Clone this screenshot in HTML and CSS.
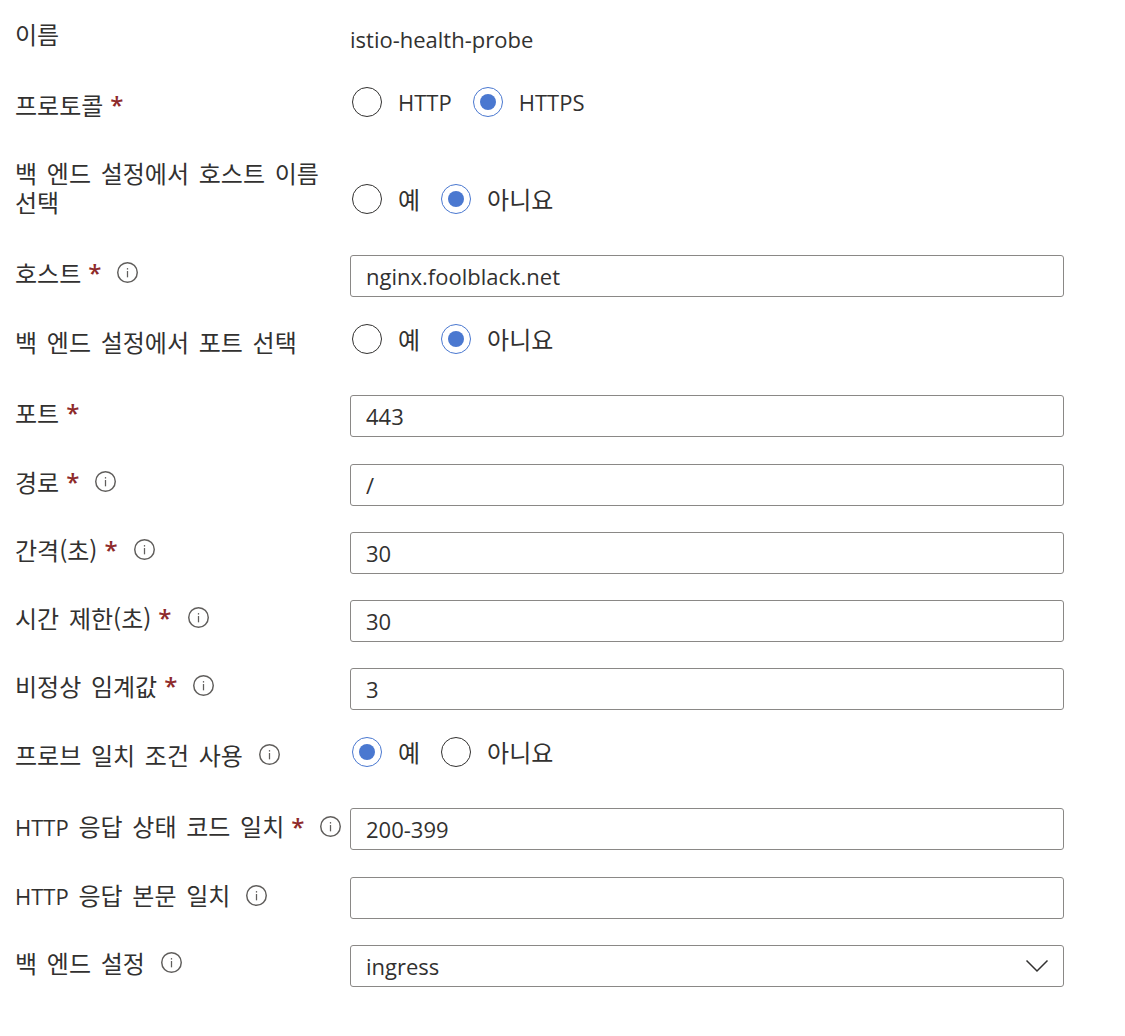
FILE: index.html
```html
<!DOCTYPE html>
<html lang="ko">
<head>
    <meta charset="utf-8">
    <title>상태 프로브</title>
    <link rel="stylesheet" href="styles.css">
</head>
<body>
<svg class="defs" width="0" height="0" aria-hidden="true">
    <symbol id="info" viewBox="0 0 20 20">
        <circle cx="10" cy="10" r="9.3" fill="none" stroke="currentColor" stroke-width="1.4"/>
        <rect x="9.4" y="8.6" width="1.2" height="6" fill="currentColor"/>
        <rect x="9.4" y="5.8" width="1.2" height="1.4" fill="currentColor"/>
    </symbol>
</svg>
<form class="probe-form">
    <div class="row row-name">
        <div class="label">이름</div>
        <div class="value">istio-health-probe</div>
    </div>

    <div class="row row-choice">
        <div class="label">프로토콜<span class="req">*</span></div>
        <div class="choices">
            <span class="radio"></span><span class="choice-text">HTTP</span>
            <span class="radio on"></span><span class="choice-text">HTTPS</span>
        </div>
    </div>

    <div class="row row-tall">
        <div class="label">백 엔드 설정에서 호스트 이름<br>선택</div>
        <div class="choices">
            <span class="radio"></span><span class="choice-text ko">예</span>
            <span class="radio on"></span><span class="choice-text ko">아니요</span>
        </div>
    </div>

    <div class="row row-field wide">
        <div class="label">호스트<span class="req">*</span><svg class="info"><use href="#info"/></svg></div>
        <input class="field" value="nginx.foolblack.net">
    </div>

    <div class="row row-choice">
        <div class="label">백 엔드 설정에서 포트 선택</div>
        <div class="choices">
            <span class="radio"></span><span class="choice-text ko">예</span>
            <span class="radio on"></span><span class="choice-text ko">아니요</span>
        </div>
    </div>

    <div class="row row-field wide">
        <div class="label">포트<span class="req">*</span></div>
        <input class="field" value="443">
    </div>

    <div class="row row-field">
        <div class="label">경로<span class="req">*</span><svg class="info"><use href="#info"/></svg></div>
        <input class="field" value="/">
    </div>

    <div class="row row-field">
        <div class="label">간격(초)<span class="req">*</span><svg class="info"><use href="#info"/></svg></div>
        <input class="field" value="30">
    </div>

    <div class="row row-field">
        <div class="label">시간 제한(초)<span class="req">*</span><svg class="info"><use href="#info"/></svg></div>
        <input class="field" value="30">
    </div>

    <div class="row row-field wide">
        <div class="label">비정상 임계값<span class="req">*</span><svg class="info"><use href="#info"/></svg></div>
        <input class="field" value="3">
    </div>

    <div class="row row-choice">
        <div class="label">프로브 일치 조건 사용<svg class="info"><use href="#info"/></svg></div>
        <div class="choices">
            <span class="radio on"></span><span class="choice-text ko">예</span>
            <span class="radio"></span><span class="choice-text ko">아니요</span>
        </div>
    </div>

    <div class="row row-field wide">
        <div class="label"><span><span class="latin">HTTP</span> 응답 상태 코드 일치</span><span class="req">*</span><svg class="info"><use href="#info"/></svg></div>
        <input class="field" value="200-399">
    </div>

    <div class="row row-field">
        <div class="label"><span><span class="latin">HTTP</span> 응답 본문 일치</span><svg class="info"><use href="#info"/></svg></div>
        <input class="field" value="">
    </div>

    <div class="row row-field">
        <div class="label">백 엔드 설정<svg class="info"><use href="#info"/></svg></div>
        <div class="field select">
            <span>ingress</span>
            <svg class="chevron" width="24" height="14" viewBox="0 0 24 14">
                <path d="M1.5 1.5 L12 12 L22.5 1.5" fill="none" stroke="#323130" stroke-width="1.5"/>
            </svg>
        </div>
    </div>
</form>
</body>
</html>
```

FILE: styles.css
```css
html, body {
    background: #ffffff;
    padding: 0;
    border: 0;
    margin: 0;
}
body {
    color: #323130;
    font-family: "Open Sans", "Noto Sans CJK KR", sans-serif;
    font-size: 22px;
}
.defs {
    display: block;
}
.probe-form {
    width: 1064px;
    padding: 17px 0 0 15px;
    height: 1019px;
}
.row {
    display: grid;
    grid-template-columns: 335px 714px;
}
.row-name {
    height: 29px;
    margin-bottom: 41px;
}
.row-choice {
    height: 30px;
    margin-bottom: 41px;
}
.row-tall {
    height: 56px;
    margin-bottom: 41px;
}
.row-tall .choices {
    margin-top: 26px;
}
.row-field {
    height: 42px;
    margin-bottom: 26px;
}
.row-field.wide {
    margin-bottom: 27px;
}
.label {
    display: flex;
    align-items: center;
    align-self: start;
    line-height: 29px;
    padding-top: 3px;
    white-space: pre;
    font-family: "Noto Sans CJK KR", sans-serif;
    font-size: 24px;
    word-spacing: 3px;
}
.row-name .label {
    padding-top: 2px;
}
.row-tall .label {
    display: block;
    padding-top: 0;
}
.latin {
    font-family: "Open Sans", sans-serif;
    font-size: 22px;
}
.req {
    color: #8e2a2a;
    margin-left: 7px;
    font-weight: 600;
    font-family: "Open Sans", sans-serif;
    font-size: 24px;
}
.info {
    width: 21px;
    height: 21px;
    margin-left: 16px;
    color: #605e5c;
}
.value {
    padding-top: 7px;
    line-height: 30px;
}
.choices {
    display: flex;
    align-items: center;
    align-self: start;
    height: 30px;
}
.radio {
    width: 30px;
    height: 30px;
    box-sizing: border-box;
    border: 1px solid #323130;
    border-radius: 50%;
    margin-left: 2px;
    display: flex;
    align-items: center;
    justify-content: center;
}
.radio.on {
    border-color: #4a78d0;
}
.radio.on::after {
    content: "";
    width: 16px;
    height: 16px;
    border-radius: 50%;
    background: #4a78d0;
}
.choice-text {
    margin: 0 19px 0 16px;
}
.choice-text.ko {
    padding-bottom: 2px;
    font-family: "Noto Sans CJK KR", sans-serif;
    font-size: 24px;
}
.field {
    width: 714px;
    height: 42px;
    box-sizing: border-box;
    border: 1px solid #8a8886;
    border-radius: 3px;
    padding: 0 15px 1px;
    margin: 0;
    background: #ffffff;
    color: #323130;
    font-family: "Open Sans", "Noto Sans CJK KR", sans-serif;
    font-size: 22px;
    outline: none;
}
.select {
    display: flex;
    align-items: center;
    justify-content: space-between;
    padding-right: 14px;
}
```
